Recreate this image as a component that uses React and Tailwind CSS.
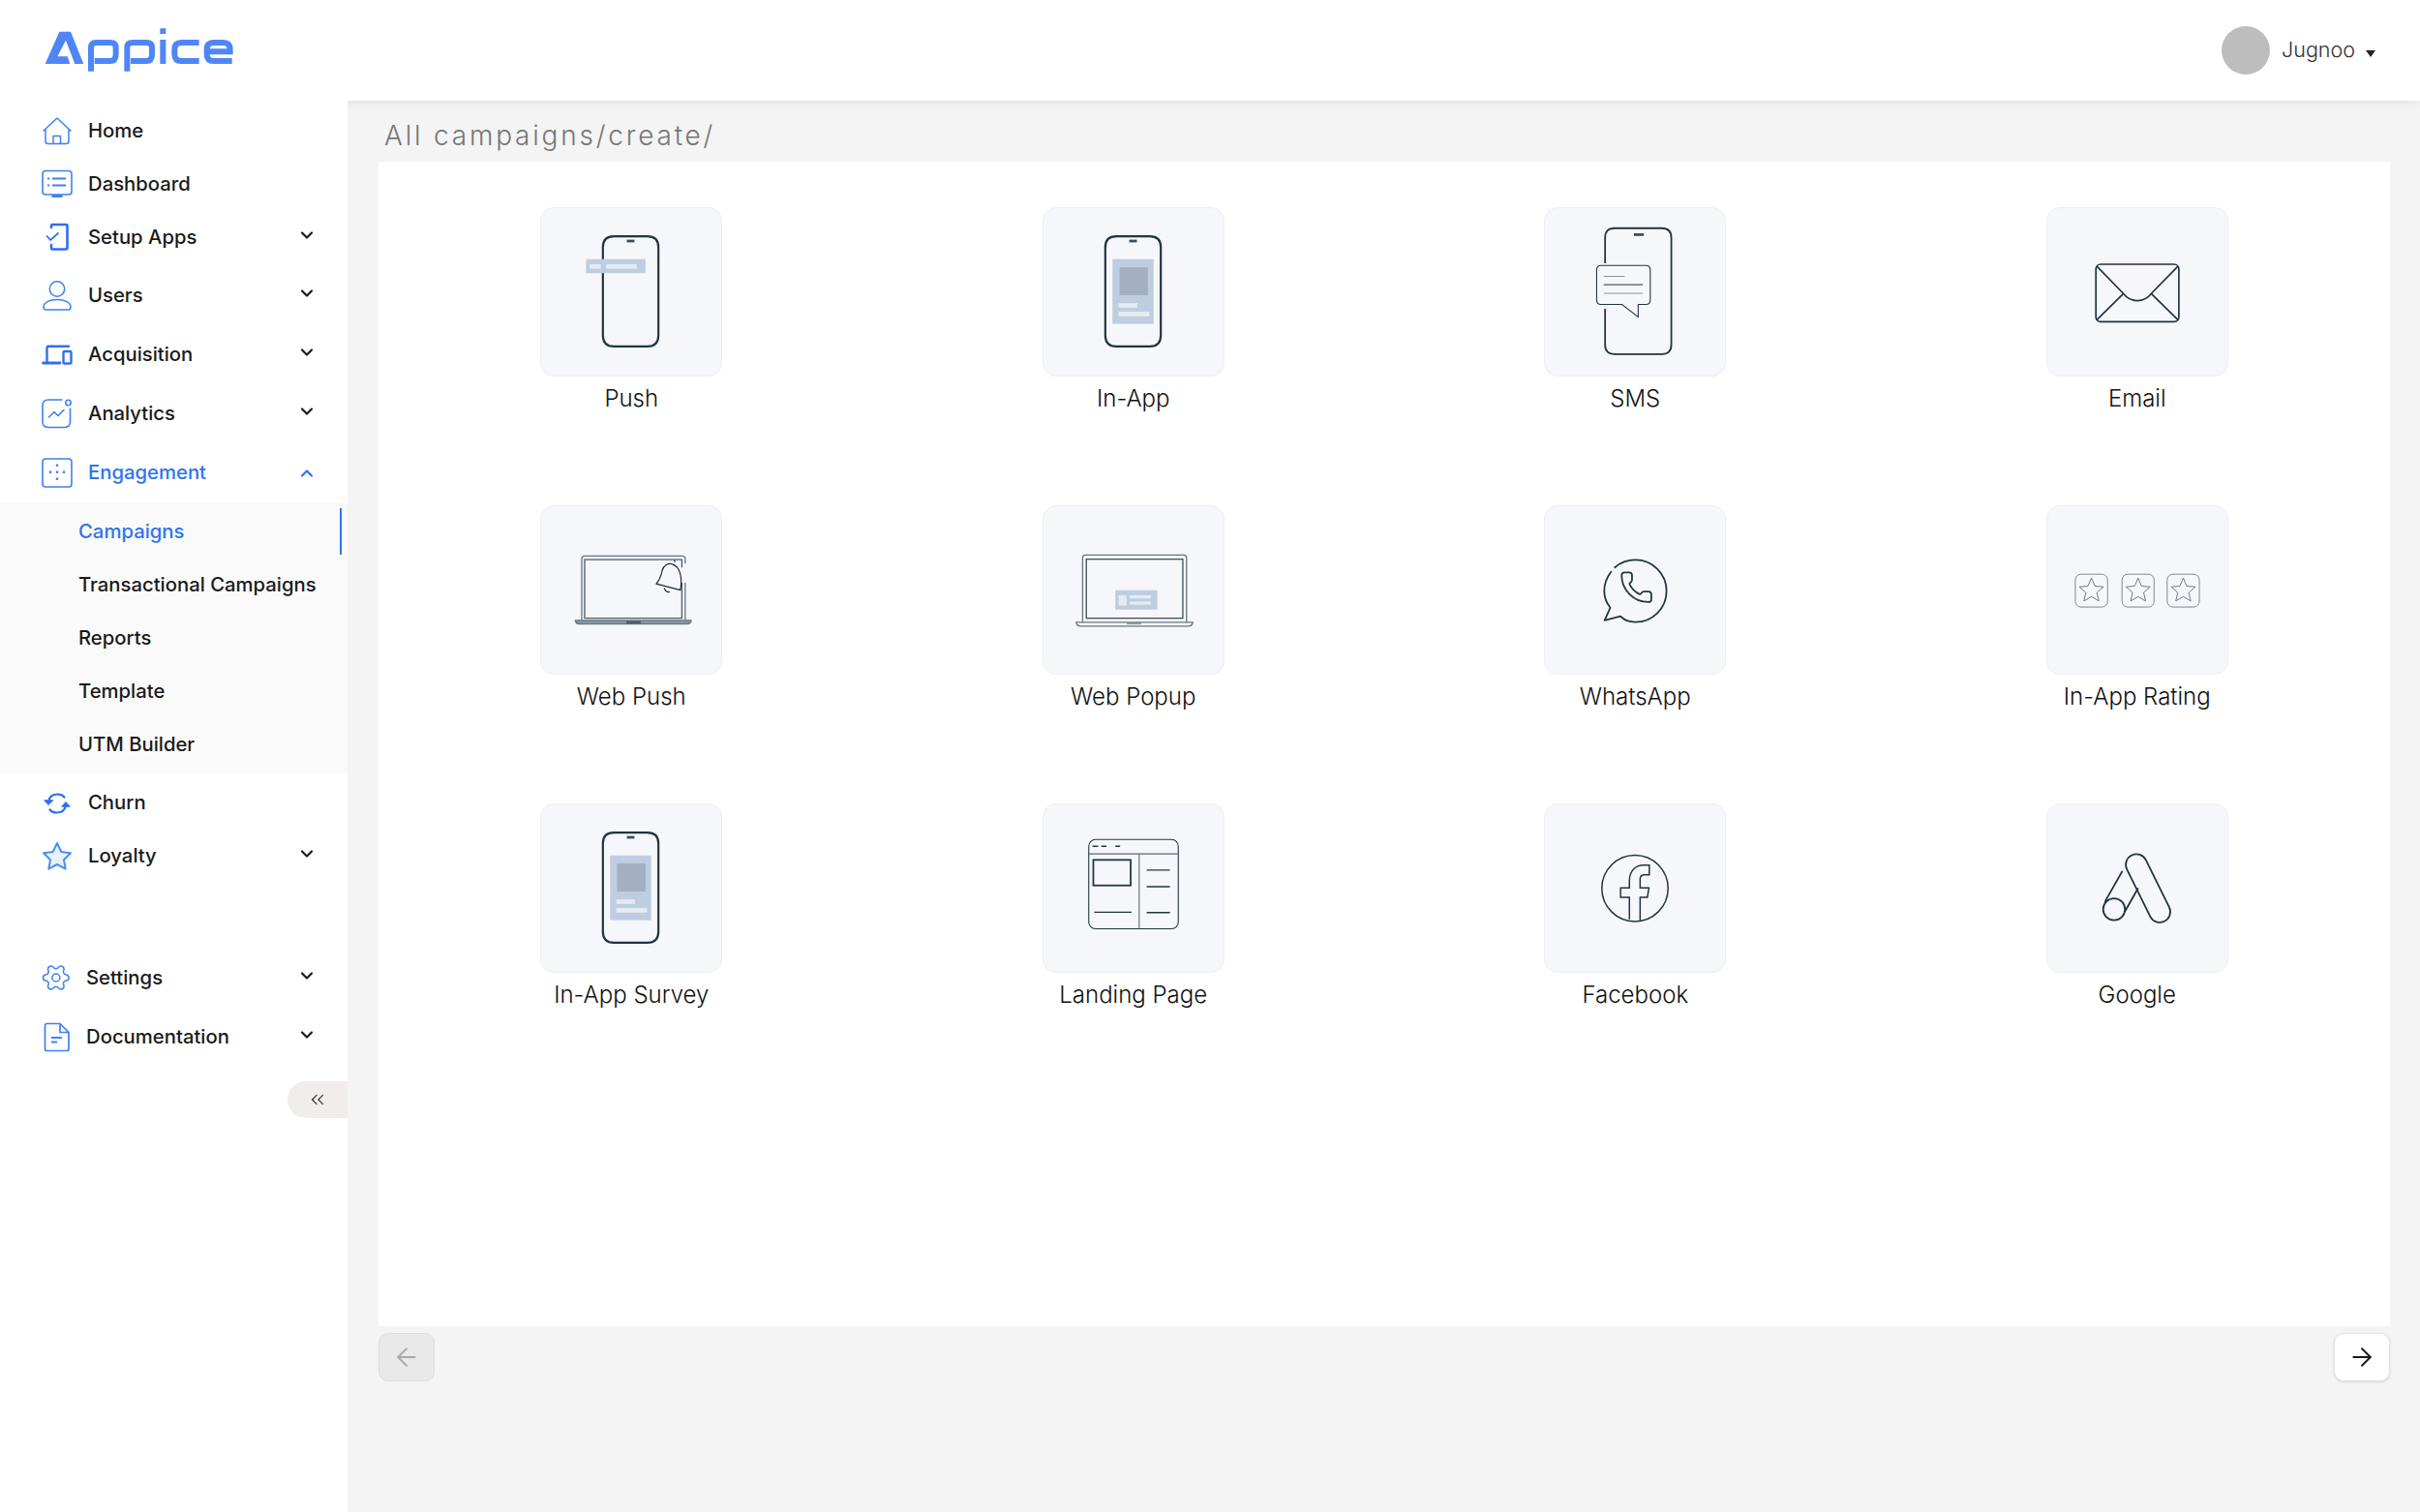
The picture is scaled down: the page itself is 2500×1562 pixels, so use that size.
import React from "react";
import { ArrowLeft, ArrowRight, ChevronDown, ChevronUp, ChevronsLeft } from "lucide-react";

const INK = "#22343f";
const PANEL = "#bfcde0";
const LIGHT = "#e6ebf3";
const DARK = "#a3afc2";

function Logo() {
  return (
    <svg width="200" height="50" viewBox="135 75 600 150" fill="none" stroke="#4f86f7" strokeWidth="18">
      <path d="M143 195 L187 95 H222 L262 195 H235 L207 122 L181 172 H212 L220 195 Z" fill="#4f86f7" stroke="none" />
      <path d="M285 218 V145 Q285 129 302 129 H345 Q362 129 362 145 V165 Q362 186 345 186 H296" />
      <path d="M397 218 V145 Q397 129 414 129 H457 Q474 129 474 145 V165 Q474 186 457 186 H408" />
      <path d="M508 120 V195 M508 85 V102" />
      <path d="M620 129 H565 Q544 129 544 150 V165 Q544 186 565 186 H620" />
      <path d="M645 157 H716 V150 Q716 129 695 129 H665 Q644 129 644 150 V165 Q644 186 665 186 H722" />
    </svg>
  );
}

// sidebar icons, all on a 32 box
const navIcons = {
  home: (
    <g fill="none" stroke="#3f80f2" strokeWidth="1.5" strokeLinejoin="round">
      <path d="M1.5 15.5 L16 2 L30.5 15.5 M4 13.5 V26 Q4 28.5 6.5 28.5 H25.5 Q28 28.5 28 26 V13.5" />
      <path d="M12 28.5 V20.5 H19.5 V28.5" />
    </g>
  ),
  dashboard: (
    <g fill="none" stroke="#3f80f2" strokeWidth="1.6">
      <rect x="1" y="1.5" width="30" height="24.5" rx="3" />
      <path d="M10.5 27.5 H21.5" strokeWidth="3" />
      <path d="M6 9.5 H8 M11 9.5 H25 M6 16.5 H8 M11 16.5 H25" strokeWidth="2.2" />
    </g>
  ),
  setup: (
    <g fill="none" stroke="#2f6fed" strokeLinecap="round" strokeLinejoin="round">
      <path d="M10 5 V3.5 Q10 2 11.5 2 H25 Q26.5 2 26.5 3.5 V26 Q26.5 27.5 25 27.5 H11.5 Q10 27.5 10 26 V23" strokeWidth="2.6" />
      <path d="M5.5 14 L9 18 L17 11" strokeWidth="1.7" />
    </g>
  ),
  users: (
    <g fill="none" stroke="#3f80f2" strokeWidth="1.5">
      <circle cx="16" cy="8.5" r="7.7" />
      <path d="M2 27 C2 22.5 8 19.5 16 19.5 C24 19.5 30 22.5 30 27 Q30 30 27.5 30 H4.5 Q2 30 2 27 Z" />
    </g>
  ),
  acquisition: (
    <g fill="none" stroke="#2f6fed" strokeWidth="2.4" strokeLinecap="round">
      <path d="M5.5 23 V8.5 Q5.5 6.7 7.3 6.7 H28" />
      <path d="M1.5 24 H19" strokeWidth="2.8" />
      <rect x="22.5" y="12" width="8" height="12.5" rx="1" />
    </g>
  ),
  analytics: (
    <g fill="none" stroke="#3f80f2" strokeWidth="1.6" strokeLinecap="round" strokeLinejoin="round">
      <path d="M21 1 H7 Q1 1 1 7 V23.5 Q1 29.5 7 29.5 H23.5 Q29.5 29.5 29.5 23.5 V10" />
      <circle cx="27.5" cy="4" r="2.7" />
      <path d="M7.5 19 L13 13.5 L17 17.5 L23 11.5" />
    </g>
  ),
  engagement: (
    <g>
      <rect x="1" y="1" width="30" height="29" rx="3" fill="none" stroke="#3f80f2" strokeWidth="1.6" />
      <g fill="#3f80f2">
        <rect x="14.8" y="6.5" width="2.4" height="2.4" />
        <rect x="14.8" y="13.5" width="2.4" height="2.4" />
        <rect x="14.8" y="20.5" width="2.4" height="2.4" />
        <rect x="7.8" y="13.5" width="2.4" height="2.4" />
        <rect x="21.8" y="13.5" width="2.4" height="2.4" />
      </g>
    </g>
  ),
  churn: (
    <g fill="none" stroke="#2f6fed" strokeWidth="2.2" strokeLinecap="round">
      <path d="M7 14 C8 9 12 6.5 16.5 6.5 C19.5 6.5 22 7.5 23.5 9.5" />
      <path d="M25 18 C24 23 20 25.5 15.5 25.5 C12.5 25.5 10 24.5 8.5 22.5" />
      <path d="M3 13 L7 17.5 L11.5 13 Z M21 19 L25 14.5 L29 19 Z" fill="#2f6fed" strokeWidth="1" />
    </g>
  ),
  loyalty: (
    <path d="M16 2 L20.3 11 L30 12.3 L23 19.2 L24.7 28.7 L16 24 L7.3 28.7 L9 19.2 L2 12.3 L11.7 11 Z" fill="#e6f1fd" stroke="#4a90f0" strokeWidth="2" strokeLinejoin="round" />
  ),
  settings: (
    <g fill="none" stroke="#3f80f2" strokeWidth="1.15" strokeLinejoin="round" transform="rotate(90 14.8 15) translate(-1.2 -1) scale(1.333)">
      <path d="M9.671 4.136a2.34 2.34 0 0 1 4.659 0 2.34 2.34 0 0 0 3.319 1.915 2.34 2.34 0 0 1 2.33 4.033 2.34 2.34 0 0 0 0 3.831 2.34 2.34 0 0 1-2.33 4.033 2.34 2.34 0 0 0-3.319 1.915 2.34 2.34 0 0 1-4.659 0 2.34 2.34 0 0 0-3.32-1.915 2.34 2.34 0 0 1-2.33-4.033 2.34 2.34 0 0 0 0-3.831A2.34 2.34 0 0 1 6.35 6.051a2.34 2.34 0 0 0 3.319-1.915" />
      <circle cx="12" cy="12" r="3" />
    </g>
  ),
  documentation: (
    <g fill="none" stroke="#3f80f2" strokeWidth="1.7" strokeLinejoin="round">
      <path d="M19 1.5 H5.5 Q3.5 1.5 3.5 3.5 V27.5 Q3.5 29.5 5.5 29.5 H26 Q28 29.5 28 27.5 V10.5 Z" />
      <path d="M19 1.5 V10.5 H28" />
      <path d="M10 16 H21 M10 20.5 H16" strokeWidth="1.8" />
    </g>
  ),
};

function NavIcon({ name }) {
  return (
    <svg width="32" height="32" viewBox="0 0 32 32" className="shrink-0">
      {navIcons[name]}
    </svg>
  );
}

function NavRow({ icon, label, chevron, active, gap = "ml-[16px]", className = "" }) {
  return (
    <div className={`flex h-[55px] items-center pl-[43px] pr-[32px] ${className}`}>
      <NavIcon name={icon} />
      <span className={`${gap} flex-1 text-[20.3px] font-[450] ${active ? "text-[#2f74ef]" : "text-[#1a1a1a]"}`}>
        {label}
      </span>
      {chevron && !active && <ChevronDown size={20} strokeWidth={2.6} className="mb-[5px] text-[#1a1a1a]" />}
      {chevron && active && <ChevronUp size={20} strokeWidth={2.6} className="text-[#2f74ef]" />}
    </div>
  );
}

function SubRow({ label, active }) {
  return (
    <div className="relative flex h-[55px] items-center pl-[81px]">
      <span className={`text-[20.3px] font-[450] ${active ? "text-[#2f74ef]" : "text-[#1a1a1a]"}`}>{label}</span>
      {active && <div className="absolute right-[6px] top-[3px] h-[48px] w-[2px] bg-[#2f74ef]" />}
    </div>
  );
}

function Phone({ d = "M76 29.5 H111 Q122.5 29.5 122.5 41 V133 Q122.5 144.5 111 144.5 H76 Q64.5 144.5 64.5 133 V41 Q64.5 29.5 76 29.5 Z" }) {
  return (
    <>
      <path d={d} fill="none" stroke={INK} strokeWidth="2.2" />
      <rect x="89.5" y="33" width="8" height="2.8" fill="#3c4d59" />
    </>
  );
}

function PhonePanel() {
  return (
    <>
      <Phone />
      <rect x="72" y="53.3" width="43" height="67.7" fill={PANEL} />
      <rect x="79.4" y="61.7" width="29.6" height="29.3" fill={DARK} />
      <rect x="78.4" y="99.3" width="19.6" height="4.7" fill={LIGHT} />
      <rect x="78.4" y="108.3" width="32.2" height="4.7" fill={LIGHT} />
    </>
  );
}

function Star({ x, y }) {
  return (
    <path
      transform={`translate(${x} ${y})`}
      d="M0 -13 L3.6 -4.6 L12.6 -3.8 L5.8 2.2 L7.8 11 L0 6.4 L-7.8 11 L-5.8 2.2 L-12.6 -3.8 L-3.6 -4.6 Z"
      fill="none"
      stroke="#5f6b76"
      strokeWidth="0.9"
      strokeLinejoin="round"
    />
  );
}

const tileIcons = {
  push: (
    <>
      <Phone />
      <rect x="46.8" y="53.3" width="62.2" height="14.7" fill={PANEL} />
      <rect x="50.6" y="58.7" width="11.7" height="4.6" fill={LIGHT} />
      <rect x="67.7" y="58.7" width="32.2" height="4.6" fill={LIGHT} />
    </>
  ),
  inapp: <PhonePanel />,
  sms: (
    <>
      <path
        d="M62.8 57.7 V31 Q62.8 21 72.8 21 H122 Q132 21 132 31 V142.7 Q132 152.7 122 152.7 H72.8 Q62.8 152.7 62.8 142.7 V105.3"
        fill="none"
        stroke={INK}
        strokeWidth="1.8"
      />
      <rect x="93" y="26.3" width="10.3" height="2.8" fill="#3c4d59" />
      <path
        d="M58.5 60 H105.5 Q110 60 110 64.5 V96.2 Q110 100.7 105.5 100.7 H97.4 V113.7 L80.4 100.7 H58.5 Q54 100.7 54 96.2 V64.5 Q54 60 58.5 60 Z"
        fill="none"
        stroke={INK}
        strokeWidth="1.1"
      />
      <path d="M61.4 71.3 H83.3 M61.4 89 H102.3" stroke="#8a939b" strokeWidth="1.2" />
      <path d="M61.4 80 H102.3" stroke="#4b5a65" strokeWidth="1.2" />
    </>
  ),
  email: (
    <g fill="none" stroke={INK} strokeWidth="1.7">
      <rect x="50.7" y="58.7" width="86.7" height="60" rx="5" />
      <path d="M51.5 60.5 L79.4 89.3 Q85 96.7 94 96.7 Q103 96.7 108.6 89.3 L136.6 60.5" />
      <path d="M79.4 89.3 L51.5 117 M108.6 89.3 L136.6 117" />
    </g>
  ),
  webpush: (
    <>
      <g fill="none" stroke="#66747f" strokeWidth="1.3">
        <path d="M150.5 60 V55 Q150.5 52 147.5 52 H45.4 Q42.4 52 42.4 55 V119 M150.5 80 V119" />
        <path d="M147 64 V55.7 H45.4 V117 H147 V80" stroke="#4a5a66" />
        <path d="M35.6 119.3 H156.8 Q156.5 123 152 123 H40 Q36 123 35.6 119.3 Z" fill="#8996a1" />
      </g>
      <rect x="89" y="120" width="15" height="2.5" fill="#4a5a66" />
      <path
        d="M120.3 81 C124 77 125.5 72 126.5 67 C128 61.5 133 59 137 60.5 C142 62 144.5 66 145.5 71.5 C146.5 76 146.5 82 145.5 87.7 Z"
        fill="#f6f7fb"
        stroke="#1d2a33"
        strokeWidth="1.2"
        strokeLinejoin="round"
      />
      <path d="M128.5 85.5 C129.5 88.5 132 90 134.5 89.5 M139 56.5 L140 58.5" fill="none" stroke="#1d2a33" strokeWidth="1.1" />
    </>
  ),
  webpopup: (
    <>
      <g fill="none" stroke="#66747f" strokeWidth="1.3">
        <path d="M40.8 121 V54 Q40.8 51 43.8 51 H146.4 Q149.4 51 149.4 54 V121" />
        <rect x="44.7" y="55.3" width="100.8" height="61.7" stroke="#3d4d59" />
        <path d="M34 121.3 H155.9 Q155.5 125.3 151 125.3 H39 Q34.5 125.3 34 121.3 Z" />
      </g>
      <rect x="87" y="121.5" width="15" height="2" fill="#8996a1" />
      <rect x="75" y="87.7" width="43.9" height="20.3" fill={PANEL} />
      <rect x="78.4" y="93" width="8.3" height="10.7" fill={LIGHT} />
      <rect x="90" y="93" width="22" height="3.4" fill={LIGHT} />
      <rect x="90" y="99.5" width="22" height="3.4" fill={LIGHT} />
    </>
  ),
  whatsapp: (
    <g fill="none" stroke={INK} strokeWidth="1.8" strokeLinejoin="round" strokeLinecap="round">
      <path d="M73 64 C79 58.5 86 56 94.5 56 C112.5 56 127 70.5 127 88.6 C127 106.7 112.5 121 94.5 121 C88 121 83 119.5 78.9 115 L62.3 119.3 L68.2 106 C64 101 61.9 95 61.9 88.6 C61.9 80.5 64.5 74.5 69 68.5" />
      <path
        transform="translate(77 66) scale(1.55)"
        strokeWidth="1.16"
        d="M13.832 16.568a1 1 0 0 0 1.213-.303l.355-.465A2 2 0 0 1 17 15h3a2 2 0 0 1 2 2v3a2 2 0 0 1-2 2A18 18 0 0 1 2 4a2 2 0 0 1 2-2h3a2 2 0 0 1 2 2v3a2 2 0 0 1-.8 1.6l-.468.351a1 1 0 0 0-.292 1.233 14 14 0 0 0 6.392 6.384"
      />
    </g>
  ),
  rating: (
    <>
      <g fill="none" stroke="#7d8790" strokeWidth="1">
        <rect x="29.2" y="71" width="33.7" height="34.3" rx="6" />
        <rect x="78" y="71" width="33.5" height="34.3" rx="6" />
        <rect x="125.2" y="71" width="33.6" height="34.3" rx="6" />
      </g>
      <Star x={46} y={88} />
      <Star x={94.8} y={88} />
      <Star x={142} y={88} />
    </>
  ),
  landing: (
    <g fill="none" stroke={INK}>
      <rect x="47.2" y="36.7" width="93.6" height="93.3" rx="7" strokeWidth="1.1" />
      <path d="M47.2 51.7 H140.8 M99.9 51.7 V130" strokeWidth="1.1" stroke="#5b6873" />
      <path d="M51.1 43.7 H57 M60.4 43.7 H65.7 M75 43.7 H80" strokeWidth="1.6" />
      <rect x="52" y="58" width="39" height="26.7" strokeWidth="1.8" />
      <path d="M107.8 68.7 H132 M107.8 86 H132 M107.8 113 H132 M53 112.7 H92" strokeWidth="1.4" />
    </g>
  ),
  facebook: (
    <g fill="none" stroke={INK} strokeWidth="1.5">
      <circle cx="94" cy="87.7" r="34.6" />
      <path d="M88.2 120 V97 H79 V87.3 H88.2 V80 C88.2 70 94 63.5 103 63.5 H109 V73.5 H104 C101 73.5 99.4 75 99.4 78 V87.3 H108.6 L107 97 H99.4 V122" />
    </g>
  ),
  google: (
    <g fill="none" stroke={INK} strokeWidth="1.8" strokeLinecap="round">
      <path d="M83.1 67.9 A11 11 0 0 1 102.9 58.1 L127.3 107.4 A11 11 0 0 1 107.5 117.2 Z" />
      <circle cx="69.7" cy="109.7" r="11.4" />
      <path d="M78 70.3 L60.4 101.3 M81.4 111.3 L94.5 88" />
    </g>
  ),
};

const channels = [
  { label: "Push", icon: "push" },
  { label: "In-App", icon: "inapp" },
  { label: "SMS", icon: "sms" },
  { label: "Email", icon: "email" },
  { label: "Web Push", icon: "webpush" },
  { label: "Web Popup", icon: "webpopup" },
  { label: "WhatsApp", icon: "whatsapp" },
  { label: "In-App Rating", icon: "rating" },
  { label: "In-App Survey", icon: "inapp" },
  { label: "Landing Page", icon: "landing" },
  { label: "Facebook", icon: "facebook" },
  { label: "Google", icon: "google" },
];

function Tile({ label, icon }) {
  return (
    <div className="flex h-[308px] flex-col items-center">
      <div className="h-[175px] w-[188px] rounded-[14px] border border-[#eceff3] bg-[#f6f7fb]">
        <svg viewBox="0 0 188 175" className="h-full w-full">
          {tileIcons[icon]}
        </svg>
      </div>
      <div className="mt-[5px] text-[24px] leading-[36px] font-light text-[#111111]">{label}</div>
    </div>
  );
}

export default function App() {
  return (
    <div className="flex h-screen flex-col overflow-hidden bg-white font-['Inter',sans-serif]">
      <header className="relative z-10 flex h-[104px] shrink-0 items-center justify-between bg-white pl-[44px] pr-[46px] shadow-[0_2px_10px_rgba(0,0,0,0.07)]">
        <div className="mb-[3px]">
          <Logo />
        </div>
        <div className="flex items-center">
          <div className="h-[50px] w-[50px] rounded-full bg-[#bdbdbd]" />
          <span className="mb-[2px] ml-[12px] text-[21.5px] font-light text-[#333333]">Jugnoo</span>
          <div className="ml-[11px] mt-[6px] h-0 w-0 border-x-[5px] border-t-[7px] border-x-transparent border-t-[#22252b]" />
        </div>
      </header>

      <div className="flex flex-1">
        <aside className="relative z-20 w-[359px] shrink-0 bg-white pt-[4px]">
          <NavRow icon="home" label="Home" />
          <NavRow icon="dashboard" label="Dashboard" />
          <NavRow icon="setup" label="Setup Apps" chevron className="mb-[5px]" />
          <NavRow icon="users" label="Users" chevron className="mb-[6px]" />
          <NavRow icon="acquisition" label="Acquisition" chevron className="mb-[6px]" />
          <NavRow icon="analytics" label="Analytics" chevron className="mb-[6px]" />
          <NavRow icon="engagement" label="Engagement" chevron active />

          <div className="mt-[3px] bg-[#fafafa] pb-[2px] pt-[3px]">
            <SubRow label="Campaigns" active />
            <SubRow label="Transactional Campaigns" />
            <SubRow label="Reports" />
            <SubRow label="Template" />
            <SubRow label="UTM Builder" />
          </div>

          <NavRow icon="churn" label="Churn" className="mt-[3px]" />
          <NavRow icon="loyalty" label="Loyalty" chevron />
          <NavRow icon="settings" label="Settings" chevron gap="ml-[14px]" className="mb-[6px] mt-[71px]" />
          <NavRow icon="documentation" label="Documentation" chevron gap="ml-[14px]" />

          <div className="ml-auto mt-[18px] flex h-[38px] w-[62px] items-center justify-center rounded-l-full bg-[#f1eded]">
            <ChevronsLeft size={22} strokeWidth={1.3} className="text-[#333333]" />
          </div>
        </aside>

        <main className="flex-1 bg-[#f4f4f4] pl-[32px] pr-[31px]">
          <div className="flex h-[63px] items-center pl-[6px] pt-[8px] text-[28px] font-light tracking-[2.8px] text-[#777777]">
            All campaigns/create/
          </div>
          <div className="grid h-[1203px] grid-cols-4 content-start bg-white px-[2px] pt-[47px]">
            {channels.map((c) => (
              <Tile key={c.label} label={c.label} icon={c.icon} />
            ))}
          </div>
          <div className="mt-[7px] flex justify-between">
            <button className="flex h-[50px] w-[58px] items-center justify-center rounded-[10px] border border-[#dddddd] bg-[#e9e9e9] text-[#aaaaaa]">
              <ArrowLeft size={30} strokeWidth={1.5} />
            </button>
            <button className="flex h-[50px] w-[58px] items-center justify-center rounded-[10px] border border-[#e3e3e3] bg-white text-[#1a1a1a] shadow-sm">
              <ArrowRight size={30} strokeWidth={1.5} />
            </button>
          </div>
        </main>
      </div>
    </div>
  );
}
